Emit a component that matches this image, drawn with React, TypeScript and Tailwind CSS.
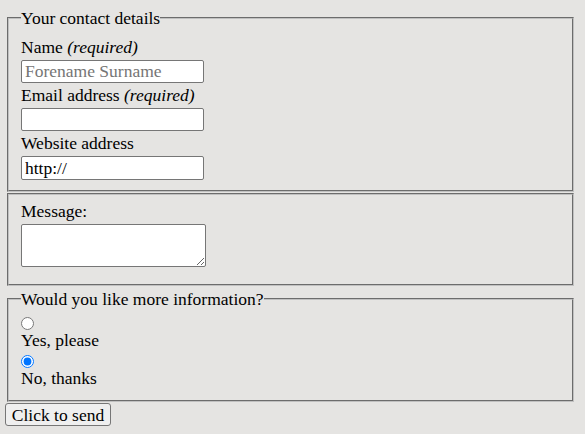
import React from "react";

export default function App() {
  return (
    <div className="w-[585px] h-[434px] bg-[#e5e4e2] text-black text-[17.5px] px-[5px] pt-[7px] overflow-hidden" style={{ fontFamily: '"Liberation Serif", serif' }}>
      <form onSubmit={(e) => e.preventDefault()}>
        <fieldset className="mx-[2px] w-[567px] border-2 [border-style:groove] border-[#c0c0c0] px-[12px] pt-[6px] pb-[10px]">
          <legend className="p-0 leading-[22px]">Your contact details</legend>
          <div className="h-[25px] leading-[25px]">
            Name <em>(required)</em>
          </div>
          <input
            type="text"
            placeholder="Forename Surname"
            className="block w-[183px] h-[23px] bg-white border border-[#767676] rounded-[2px] px-[3px] placeholder:text-[#757575] outline-none"
          />
          <div className="h-[25px] leading-[25px]">
            Email address <em>(required)</em>
          </div>
          <input
            type="text"
            className="block w-[183px] h-[23px] bg-white border border-[#767676] rounded-[2px] px-[3px] outline-none"
          />
          <div className="h-[25px] leading-[25px]">Website address</div>
          <input
            type="text"
            defaultValue="http://"
            className="block w-[183px] h-[24px] bg-white border border-[#767676] rounded-[2px] px-[3px] outline-none"
          />
        </fieldset>
        <fieldset className="mx-[2px] mt-px w-[567px] border-2 [border-style:groove] border-[#c0c0c0] px-[12px] pt-[6px] pb-[17px]">
          <div className="h-[23px] leading-[21px]">Message:</div>
          <textarea className="block w-[185px] h-[43px] bg-white border border-[#767676] rounded-[2px] resize outline-none" />
        </fieldset>
        <fieldset className="mx-[2px] mt-[2px] w-[567px] border-2 [border-style:groove] border-[#c0c0c0] px-[12px] pt-[2px] pb-[12px]">
          <legend className="p-0 leading-[22px]">Would you like more information?</legend>
          <div className="flex flex-col items-start">
            <input type="radio" name="info" className="m-0 mt-[5px] w-[13px] h-[13px]" />
            <div className="h-[20px] leading-[20px]">Yes, please</div>
            <input type="radio" name="info" defaultChecked className="m-0 mt-[5px] w-[13px] h-[13px]" />
            <div className="h-[20px] leading-[20px]">No, thanks</div>
          </div>
        </fieldset>
        <button
          type="submit"
          className="block mt-[1px] w-[106px] h-[23px] bg-[#efefef] border border-[#767676] rounded-[3px] px-0 leading-[20px] whitespace-nowrap text-center"
        >
          Click to send
        </button>
      </form>
    </div>
  );
}
